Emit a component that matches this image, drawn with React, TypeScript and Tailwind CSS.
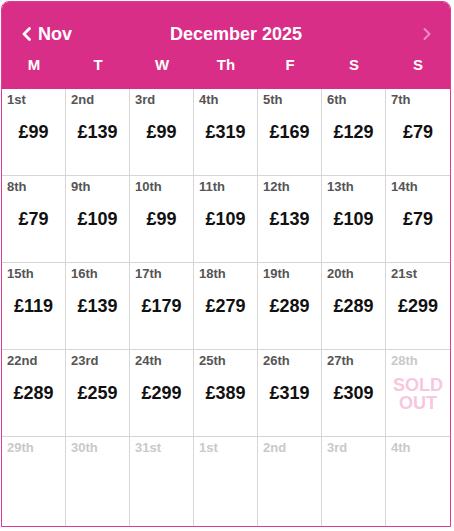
import React from 'react';

type Day = {
  label: string;
  price?: string;
  soldOut?: boolean;
  faded?: boolean;
};

const weekdays = ['M', 'T', 'W', 'Th', 'F', 'S', 'S'];

const prices = [
  '£99', '£139', '£99', '£319', '£169', '£129', '£79',
  '£79', '£109', '£99', '£109', '£139', '£109', '£79',
  '£119', '£139', '£179', '£279', '£289', '£289', '£299',
  '£289', '£259', '£299', '£389', '£319', '£309',
];

const suffix = (n: number) => {
  if (n === 1 || n === 21 || n === 31) return 'st';
  if (n === 2 || n === 22) return 'nd';
  if (n === 3 || n === 23) return 'rd';
  return 'th';
};

const days: Day[] = [];
for (let d = 1; d <= 31; d++) {
  if (d <= 27) days.push({ label: `${d}${suffix(d)}`, price: prices[d - 1] });
  else if (d === 28) days.push({ label: '28th', soldOut: true, faded: true });
  else days.push({ label: `${d}${suffix(d)}`, faded: true });
}
[1, 2, 3, 4].forEach((d) => days.push({ label: `${d}${suffix(d)}`, faded: true }));

const DayCell: React.FC<{ day: Day; index: number }> = ({ day, index }) => {
  const lastCol = index % 7 === 6;
  const lastRow = index >= 28;
  return (
    <div
      className={`flex flex-col px-[5px] pt-[3px] ${lastRow ? 'h-[89px]' : 'h-[87px] border-b border-[#d6d6d6]'} ${
        lastCol ? '' : 'border-r border-[#d6d6d6]'
      }`}
    >
      <span className={`text-[13px] leading-[16px] font-semibold ${day.faded ? 'text-[#c9c9c9]' : 'text-[#555555]'}`}>
        {day.label}
      </span>
      {day.price && (
        <span className="mt-[13px] text-center text-[18px] leading-[22px] font-bold text-[#111111]">{day.price}</span>
      )}
      {day.soldOut && (
        <div className="mt-[7px] flex flex-col items-center text-[18px] leading-[18px] font-bold text-[#f7c7df]">
          <span className="block h-[18px]">SOLD</span>
          <span className="block h-[18px]">OUT</span>
        </div>
      )}
    </div>
  );
};

const App: React.FC = () => {
  return (
    <div className="w-[454px] h-[531px] bg-white pl-px pt-px" style={{ fontFamily: '"Liberation Sans", Arial, sans-serif' }}>
      <div className="w-[450px] border border-[#e0398f] rounded-t-[8px] overflow-hidden bg-white">
        <div className="bg-[#d92e88] h-[87px] pt-[22px] text-white">
          <div className="flex items-center h-[20px] pl-[19px] pr-[18px]">
            <div className="flex items-center gap-[6px]">
              <svg width="11" height="14" viewBox="0 0 11 14" fill="none">
                <path d="M8.5 1.5 L3 7 L8.5 12.5" stroke="white" strokeWidth="2.8" strokeLinecap="round" strokeLinejoin="round" />
              </svg>
              <span className="text-[18px] leading-[20px] font-bold">Nov</span>
            </div>
            <span className="ml-[98px] text-[18px] leading-[20px] font-bold">December 2025</span>
            <svg className="ml-auto" width="10" height="14" viewBox="0 0 10 14" fill="none">
              <path d="M2.5 2 L7.5 7 L2.5 12" stroke="#ee8cc0" strokeWidth="2" strokeLinecap="round" strokeLinejoin="round" />
            </svg>
          </div>
          <div className="grid grid-cols-7 mt-[11px] h-[20px]">
            {weekdays.map((w, i) => (
              <span key={i} className="text-center text-[15px] leading-[20px] font-semibold">
                {w}
              </span>
            ))}
          </div>
        </div>
        <div className="grid grid-cols-7">
          {days.map((day, i) => (
            <DayCell key={i} day={day} index={i} />
          ))}
        </div>
      </div>
    </div>
  );
};

export default App;
